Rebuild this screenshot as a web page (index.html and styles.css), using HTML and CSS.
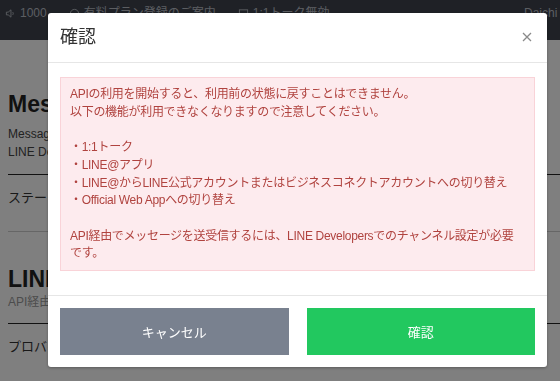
FILE: index.html
```html
<!DOCTYPE html>
<html lang="ja">
<head>
<meta charset="utf-8">
<link rel="stylesheet" href="styles.css">
</head>
<body>
<header class="topbar">
  <div class="tb-item"><svg class="tb-icon" viewBox="0 0 12 12" width="11" height="11"><path d="M1.5 4.5h2l3-2.5v8l-3-2.5h-2z" fill="none" stroke="currentColor" stroke-width="1"/><path d="M8.5 4.5q1 1.5 0 3" fill="none" stroke="currentColor" stroke-width="1"/></svg>1000</div>
  <div class="tb-item"><svg class="tb-icon" viewBox="0 0 12 12" width="11" height="11"><circle cx="6" cy="6" r="4.5" fill="none" stroke="currentColor" stroke-width="1"/></svg>有料プラン登録のご案内</div>
  <div class="tb-item"><svg class="tb-icon" viewBox="0 0 12 12" width="11" height="11"><rect x="1.5" y="2" width="9" height="8" fill="none" stroke="currentColor" stroke-width="1"/></svg>1:1トーク無効</div>
  <div class="tb-user">Daichi O</div>
</header>
<main class="page">
  <section class="sec">
    <h2 class="sec-title">Messaging API</h2>
    <p class="sec-desc">Messaging APIを利用すると、<br>LINE Developersで設定が必要です。</p>
    <div class="row">ステータス</div>
  </section>
  <section class="sec sec2">
    <h2 class="sec-title">LINE Developers</h2>
    <p class="sec-desc sub">API経由でメッセージを送受信します。</p>
    <div class="row">プロバイダー</div>
  </section>
</main>
<div class="backdrop"></div>
<div class="modal">
  <div class="modal-head">
    <h3 class="modal-title">確認</h3>
    <svg class="close" viewBox="0 0 10 10" width="10" height="10"><path d="M1 1L9 9M9 1L1 9" stroke="#8a8a8a" stroke-width="1.3" fill="none"/></svg>
  </div>
  <div class="modal-body">
    <div class="alert">
      <p>APIの利用を開始すると、利用前の状態に戻すことはできません。<br>以下の機能が利用できなくなりますので注意してください。</p>
      <p>・1:1トーク<br>・LINE@アプリ<br>・LINE@からLINE公式アカウントまたはビジネスコネクトアカウントへの切り替え<br>・Official Web Appへの切り替え</p>
      <p>API経由でメッセージを送受信するには、LINE Developersでのチャンネル設定が必要です。</p>
    </div>
  </div>
  <div class="modal-foot">
    <button class="btn btn-cancel">キャンセル</button>
    <button class="btn btn-ok">確認</button>
  </div>
</div>
</body>
</html>
```
FILE: styles.css
```css
html, body {
  margin: 0;
  padding: 0;
  background: #fff;
  font-family: "Liberation Sans", "Noto Sans CJK JP", sans-serif;
  color: #333;
  width: 560px;
  height: 381px;
  overflow: hidden;
}
.topbar {
  height: 40px;
  background: #3e434d;
  color: #b8bcc4;
  display: flex;
  align-items: flex-start;
  padding: 6px 0 0 5px;
  box-sizing: border-box;
  font-size: 12px;
  gap: 22px;
}
.tb-item {
  display: flex;
  align-items: center;
  gap: 4px;
  line-height: 14px;
}
.tb-user {
  margin-left: auto;
  margin-right: -10px;
  line-height: 14px;
}
.page {
  padding: 0 0 0 8px;
}
.sec-title {
  margin: 0;
  font-size: 23px;
  font-weight: bold;
  color: #222;
  line-height: 28px;
}
.sec {
  padding-top: 50px;
}
.sec-desc {
  margin: 7px 0 0;
  font-size: 12px;
  line-height: 18px;
  color: #444;
  padding-bottom: 13px;
  border-bottom: 1px solid #222;
}
.row {
  font-size: 13px;
  line-height: 20px;
  padding: 13px 0 23px;
  border-bottom: 1px solid #ccc;
  color: #333;
}
.sec2 {
  padding-top: 33px;
}
.sec2 .sec-desc {
  margin-top: 0;
  padding-bottom: 12px;
}
.sec2 .sub {
  color: #999;
}
.sec2 .row {
  border-bottom: none;
}
.backdrop {
  position: fixed;
  inset: 0;
  background: rgba(0, 0, 0, 0.5);
}
.modal {
  position: fixed;
  top: 13px;
  left: 48px;
  width: 499px;
  background: #fff;
  border-radius: 3px;
  box-shadow: 0 1px 3px rgba(0, 0, 0, 0.3);
}
.modal-head {
  height: 50px;
  box-sizing: border-box;
  border-bottom: 1px solid #e6e6e6;
  display: flex;
  align-items: center;
  justify-content: space-between;
  padding: 0 15px 2px 12px;
}
.modal-title {
  margin: 0;
  font-size: 18px;
  font-weight: normal;
  color: #333;
  line-height: 24px;
}
.close {
  display: block;
}
.modal-body {
  padding: 14px 12px 24px;
}
.alert {
  background: #fdebee;
  border: 1px solid #f9d3d8;
  color: #b0433f;
  font-size: 12px;
  letter-spacing: -0.3px;
  line-height: 17.7px;
  padding: 8px 9px 7px;
}
.alert p {
  margin: 0 0 17.7px;
}
.alert p:last-child {
  margin-bottom: 0;
}
.modal-foot {
  border-top: 1px solid #e6e6e6;
  padding: 12px 12px 12px;
  display: flex;
  gap: 18px;
}
.btn {
  flex: 1;
  height: 47px;
  border: none;
  border-radius: 0;
  color: #fff;
  font-family: "Liberation Sans", "Noto Sans CJK JP", sans-serif;
  font-size: 13px;
  padding: 0;
}
.btn-cancel {
  background: #79818f;
}
.btn-ok {
  background: #22c85f;
}
```
